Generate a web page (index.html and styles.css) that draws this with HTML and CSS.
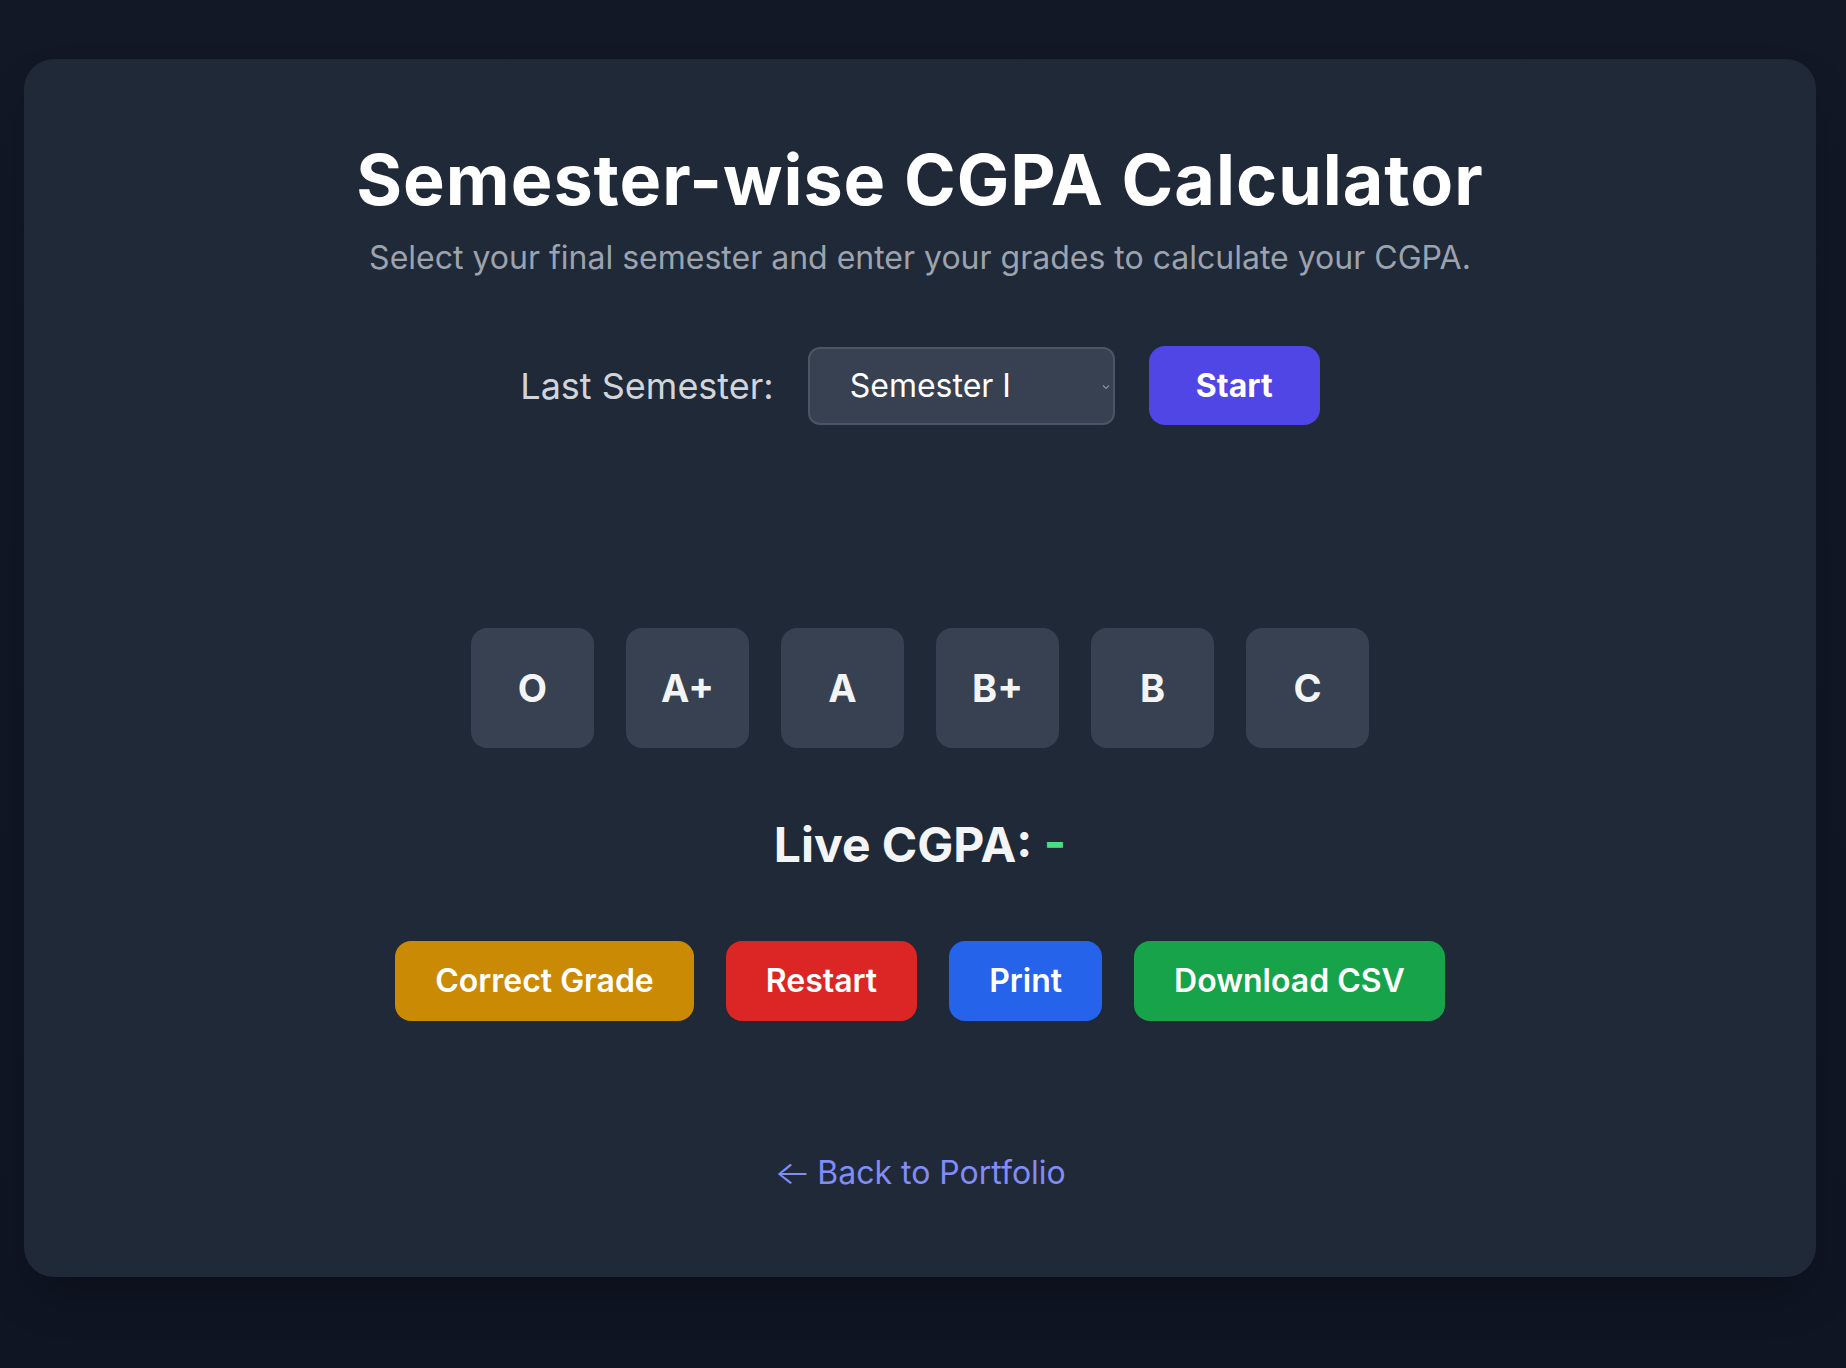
FILE: index.html
```html
<!DOCTYPE html>
<html lang="en">
<head>
<meta charset="utf-8">
<title>Semester-wise CGPA Calculator</title>
<link rel="stylesheet" href="styles.css">
</head>
<body>
<main class="page">
  <section class="card">
    <h1 class="title">Semester-wise CGPA Calculator</h1>
    <p class="subtitle">Select your final semester and enter your grades to calculate your CGPA.</p>

    <div class="setup">
      <label class="setup-label" for="sem">Last Semester:</label>
      <div class="select-wrap">
        <select id="sem" class="select">
          <option>Semester I</option>
          <option>Semester II</option>
          <option>Semester III</option>
          <option>Semester IV</option>
        </select>
        <svg class="chevron" width="8" height="6" viewBox="0 0 8 6" aria-hidden="true"><path d="M1 1.5 L4 4.5 L7 1.5" fill="none" stroke="#8b919c" stroke-width="1.2"/></svg>
      </div>
      <button class="btn btn-start">Start</button>
    </div>

    <div class="grades">
      <button class="grade">O</button>
      <button class="grade">A+</button>
      <button class="grade">A</button>
      <button class="grade">B+</button>
      <button class="grade">B</button>
      <button class="grade">C</button>
    </div>

    <h2 class="live">Live CGPA: <span class="live-value">-</span></h2>

    <div class="actions">
      <button class="btn btn-yellow">Correct Grade</button>
      <button class="btn btn-red">Restart</button>
      <button class="btn btn-blue">Print</button>
      <button class="btn btn-green">Download CSV</button>
    </div>

    <a class="back" href="#"><span class="back-arrow">&larr;</span> Back to Portfolio</a>
  </section>
</main>
</body>
</html>
```

FILE: styles.css
```css
* { box-sizing: border-box; }

html, body {
  margin: 0;
  padding: 0;
}

body {
  min-height: 1368px;
  background: linear-gradient(to bottom, #121826, #0f1523);
  font-family: Inter, "Noto Sans", "Liberation Sans", sans-serif;
  color: #f3f4f6;
}

.page {
  padding: 59px 30px 0 24px;
}

.card {
  width: 1792px;
  background: #1f2937;
  border-radius: 30px;
  box-shadow: 0 25px 50px -12px rgba(0, 0, 0, 0.3);
  padding: 79px 40px 80px;
  display: flex;
  flex-direction: column;
  align-items: center;
}

.title {
  margin: 0;
  font-size: 70px;
  line-height: 1.2;
  font-weight: 700;
  color: #ffffff;
  letter-spacing: 1px;
}

.subtitle {
  margin: 12px 0 0;
  font-size: 32px;
  line-height: 48px;
  color: #9ca3af;
}

.setup {
  margin-top: 64px;
  display: flex;
  align-items: center;
  gap: 34px;
}

.setup-label {
  font-size: 36px;
  color: #d1d5db;
}

.select-wrap {
  position: relative;
}

.select {
  appearance: none;
  -webkit-appearance: none;
  width: 307px;
  height: 78px;
  padding: 0 20px 0 40px;
  background: #374151;
  border: 2px solid #4b5563;
  border-radius: 12px;
  color: #ffffff;
  font-family: inherit;
  font-size: 32px;
}

.chevron {
  position: absolute;
  right: 5px;
  top: 37px;
}

.btn {
  border: none;
  border-radius: 16px;
  color: #ffffff;
  font-family: inherit;
  font-size: 32px;
  font-weight: 600;
  height: 80px;
  padding: 0 40px;
}

.btn-start {
  background: #4f46e5;
  font-weight: 700;
  width: 171px;
  height: 79px;
  padding: 0;
}

.grades {
  margin-top: 203px;
  display: flex;
  gap: 32px;
}

.grade {
  width: 123px;
  height: 120px;
  border: none;
  border-radius: 16px;
  background: #374151;
  color: #f3f4f6;
  font-family: inherit;
  font-size: 38px;
  font-weight: 700;
}

.live {
  margin: 68px 0 0;
  font-size: 48px;
  line-height: 1.2;
  font-weight: 700;
  color: #f3f4f6;
}

.live-value {
  color: #4ade80;
}

.actions {
  margin-top: 67px;
  display: flex;
  gap: 32px;
}

.btn-yellow { background: #ca8a04; }
.btn-red { background: #dc2626; }
.btn-blue { background: #2563eb; }
.btn-green { background: #16a34a; }

.back {
  margin-top: 128px;
  font-size: 32px;
  line-height: 48px;
  color: #818cf8;
  text-decoration: none;
}

.back-arrow {
  display: inline-block;
  width: 34px;
  font-weight: 300;
  transform: scaleX(1.22);
  transform-origin: left center;
}
```
